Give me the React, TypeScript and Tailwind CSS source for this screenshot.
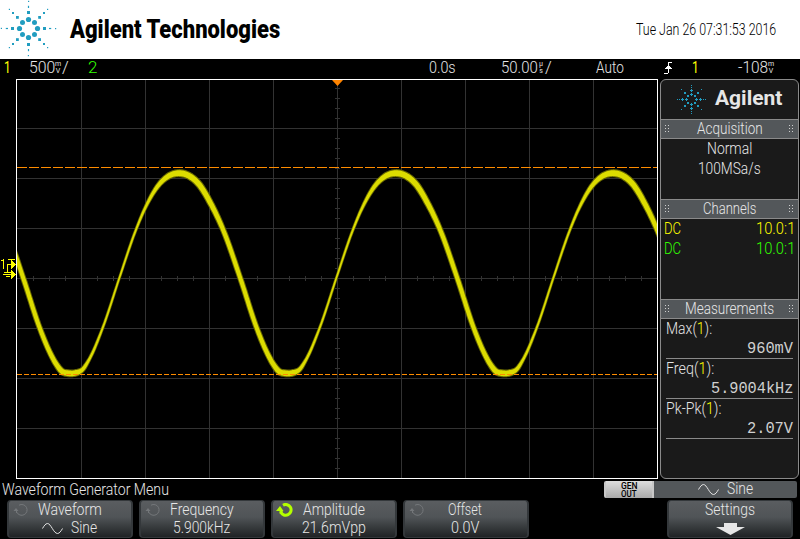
import { useLayoutEffect, useRef, type ReactNode } from "react";

/* Text stretched horizontally to fill the width given in its class name. */
function Fit({ className = "", children }: { className?: string; children: ReactNode }) {
  const outer = useRef<HTMLSpanElement>(null);
  const inner = useRef<HTMLSpanElement>(null);
  useLayoutEffect(() => {
    const apply = () => {
      if (!outer.current || !inner.current) return;
      const natural = inner.current.offsetWidth;
      if (natural) inner.current.style.transform = `translateY(-1px) scaleX(${outer.current.clientWidth / natural})`;
    };
    apply();
    document.fonts?.ready.then(apply);
  }, []);
  return (
    <span ref={outer} className={`block shrink-0 whitespace-nowrap ${className}`}>
      <span ref={inner} className="inline-block origin-left">
        {children}
      </span>
    </span>
  );
}

const C = "#219dc0";

function Spark({ className }: { className: string }) {
  const arms = [0, 90, 180, 270];
  return (
    <svg className={className} viewBox="-28.5 -28.5 57 57" fill={C}>
      {arms.map((a) => (
        <g key={a} transform={`rotate(${a})`}>
          <circle cx="9" cy="0" r="2.6" />
          <rect x="14.5" y="-1.5" width="3" height="3" />
          <rect x="20.5" y="-0.6" width="2.2" height="1.2" />
          <rect x="26.5" y="-0.5" width="1.2" height="1.2" />
          <circle cx="6" cy="6" r="2.5" />
          <rect x="9.7" y="9.7" width="2.8" height="2.8" />
          <rect x="14.5" y="14.5" width="2" height="2" />
          <rect x="18.5" y="18.5" width="1.2" height="1.2" />
        </g>
      ))}
    </svg>
  );
}

function SmallSpark({ className }: { className: string }) {
  return (
    <svg className={className} viewBox="-14.5 -14.5 29 29" fill={C} shapeRendering="crispEdges">
      {[0, 90, 180, 270].map((a) => (
        <g key={a} transform={`rotate(${a})`}>
          <path d="M3.5-.5h1v-1h1v1h1v1h-1v1h-1v-1h-1z" />
          <rect x="8.5" y="-1.5" width="1" height="3" />
          <rect x="7.5" y="-0.5" width="3" height="1" />
          <rect x="11.5" y="-0.5" width="1" height="1" />
          <rect x="13.5" y="-0.5" width="1" height="1" />
          <rect x="2.5" y="2.5" width="2" height="2" />
          <rect x="5.5" y="5.5" width="2" height="2" />
          <rect x="9.5" y="9.5" width="1" height="1" />
        </g>
      ))}
    </svg>
  );
}

/* One period of the trace: offset from the crest, height, stroke thickness. */
const CYCLE: [number, number, number][] = [
  [0, 173, 7.2],
  [10, 175.8, 7],
  [20, 184.5, 6.5],
  [31, 202.5, 6],
  [44, 230, 5.2],
  [61, 278, 5],
  [77.5, 328, 5],
  [87, 351, 5.2],
  [94, 364, 5.6],
  [99.5, 371, 6.3],
  [106, 373, 7],
  [114, 372.5, 6.5],
  [120.5, 369, 4.5],
  [127, 359, 3],
  [141, 326, 2.2],
  [157, 278, 2],
  [173.5, 230, 2.3],
  [183, 207.5, 3],
  [197, 184, 4.8],
  [207, 175.5, 6.3],
];
const PERIOD = 217;

function sample(x: number): [number, number] {
  const t = (((x - 178.8) % PERIOD) + PERIOD) % PERIOD;
  const n = CYCLE.length;
  const at = (i: number): [number, number, number] => {
    const k = ((i % n) + n) % n;
    const turn = Math.floor(i / n);
    return [CYCLE[k][0] + turn * PERIOD, CYCLE[k][1], CYCLE[k][2]];
  };
  let i = 0;
  while (at(i + 1)[0] <= t) i++;
  const tangent = (j: number) => {
    const a = at(j - 1), b = at(j), c = at(j + 1);
    const h0 = b[0] - a[0], h1 = c[0] - b[0];
    const s0 = (b[1] - a[1]) / h0, s1 = (c[1] - b[1]) / h1;
    return (s0 * h1 + s1 * h0) / (h0 + h1);
  };
  const b = at(i), c = at(i + 1);
  const h = c[0] - b[0];
  const u = (t - b[0]) / h;
  const m0 = tangent(i) * h;
  const m1 = tangent(i + 1) * h;
  const y =
    (2 * u ** 3 - 3 * u ** 2 + 1) * b[1] + (u ** 3 - 2 * u ** 2 + u) * m0 +
    (-2 * u ** 3 + 3 * u ** 2) * c[1] + (u ** 3 - u ** 2) * m1;
  return [y, b[2] + (c[2] - b[2]) * u];
}

function band(scale: number, extra: number) {
  const up: string[] = [];
  const down: string[] = [];
  for (let x = 14; x <= 660; x += 1) {
    const [y, w] = sample(x);
    const slope = sample(x + 0.5)[0] - sample(x - 0.5)[0];
    const len = Math.hypot(1, slope);
    const half = (w * scale + extra) / 2;
    const nx = (-slope / len) * half;
    const ny = half / len;
    up.push(`${(x + 0.5 - nx).toFixed(2)},${(y + 0.2 - ny).toFixed(2)}`);
    down.unshift(`${(x + 0.5 + nx).toFixed(2)},${(y + 0.2 + ny).toFixed(2)}`);
  }
  return [...up, ...down].join(" ");
}

const V_LINES = [81, 145, 209, 273, 337, 401, 465, 529, 593];
const H_LINES = [128, 178, 228, 278, 328, 378, 428];
const X_TICKS = Array.from({ length: 39 }, (_, i) => 33 + i * 16);
const Y_TICKS = Array.from({ length: 39 }, (_, i) => 88 + i * 10);

function Plot() {
  return (
    <svg className="block h-[400px] w-[660px] shrink-0" viewBox="0 79 660 400">
      <defs>
        <clipPath id="area">
          <rect x="17" y="80" width="640" height="398" />
        </clipPath>
      </defs>
      <g fill="#323232" shapeRendering="crispEdges">
        {V_LINES.map((x) => <rect key={x} x={x} y="80" width="1" height="398" />)}
        {H_LINES.map((y) => <rect key={y} x="17" y={y} width="640" height="1" />)}
        {X_TICKS.map((x) => <rect key={x} x={x} y="276" width="1" height="5" />)}
        {Y_TICKS.map((y) => <rect key={y} x="335" y={y} width="5" height="1" />)}
      </g>
      <g clipPath="url(#area)">
        <polygon points={band(1, 1)} fill="#686800" />
        <polygon points={band(0.82, 0)} fill="#dcdc00" />
      </g>
      <g stroke="#ff8c00" shapeRendering="crispEdges">
        <line x1="17" x2="657" y1="167.5" y2="167.5" strokeDasharray="10 2" />
        <line x1="17" x2="657" y1="374.5" y2="374.5" strokeDasharray="5 2" />
      </g>
      <path d="M332 80h11l-5.5 6z" fill="#ff8400" />
      <rect x="16.5" y="79.5" width="641" height="399" fill="none" stroke="#fff" shapeRendering="crispEdges" />
      <g fill="#ffff00" shapeRendering="crispEdges">
        <path d="M3 259h1v10h-1v-8h-2v-1h2z" />
        <path d="M8 259h7v1h-3v2h-1v-2h-3z" />
        <path d="M7 264h4v1h-3v8h-1z" />
        <path d="M4 272h7v1h-7zM3 274h9v1h-9zM6 276h4v1h-4z" />
        {[264, 274].map((y) =>
          [4, 3, 2, 1, 0].map((r, i) => (
            <rect key={`${y}-${r}`} x={11 + i} y={y - r} width="1" height={2 * r + 1} />
          ))
        )}
      </g>
    </svg>
  );
}

function Sine({ className = "" }: { className?: string }) {
  return (
    <svg className={`h-[13px] w-[21px] shrink-0 ${className}`} viewBox="0 0 21 13" fill="none" stroke="#e6e6e6" strokeWidth="1">
      <path d="M.5 6.5C2 4 3.500 1.500 5.500 1.500C9 1.500 11.500 11.500 15.500 11.500C17.500 11.500 19 9 20.500 6.500" />
    </svg>
  );
}

function Stacked({ top, bottom }: { top: string; bottom: string }) {
  return (
    <span className="flex w-[6px] shrink-0 flex-col items-center pt-[2px] text-[7px] leading-[6.5px] font-normal">
      <span>{top}</span>
      <span>{bottom}</span>
    </span>
  );
}

function Grip() {
  return (
    <svg className="h-[8px] w-[5px]" viewBox="0 0 5 8" fill="#d0d0d0" shapeRendering="crispEdges">
      {[0, 3, 6].map((y) => (
        <path key={y} d={`M0 ${y}h1v1h-1zM3 ${y}h1v1h-1z`} />
      ))}
    </svg>
  );
}

function Head({ children }: { children: ReactNode }) {
  return (
    <div className="flex h-[20px] items-center justify-between border-y border-[#8a8a8a] bg-[#53575a] px-[4px] leading-[18px]">
      <Grip />
      {children}
      <Grip />
    </div>
  );
}

function Measure({ label, w, value, vw }: { label: string; w: string; value: string; vw: string }) {
  return (
    <div className="ml-[5px] h-[40px] w-[127px] border-b border-[#8a8a8a]">
      <Fit className={`${w} h-[20px]`}>
        {label}(<span className="text-[#ffff00]">1</span>):
      </Fit>
      <div className="flex h-[19px] justify-end pt-[2px] font-['Liberation_Mono',monospace] text-[16px] leading-[19px] font-normal text-[#d0d0d0]">
        <Fit className={vw}>{value}</Fit>
      </div>
    </div>
  );
}

function Knob({ on }: { on?: boolean }) {
  const color = on ? "#b4ff00" : "#74777a";
  return (
    <svg className="absolute top-[2px] left-[3px] h-[16px] w-[18px]" viewBox="0 0 18 16">
      <path d="M7 2.200A5.400 5.400 0 1 1 4.800 9.200" fill="none" stroke={color} strokeWidth={on ? 3 : 1} />
      <path d={on ? "M0 8L4 3L7.500 8L6.500 8.500V10.500H3.500V8z" : "M1.500 8L4 5L6.500 8H5v2H4V8z"} fill={color} />
    </svg>
  );
}

function Key({ className = "", children }: { className?: string; children: ReactNode }) {
  return (
    <div className={`relative flex h-[38px] w-[126px] shrink-0 flex-col items-center rounded-[4px] border-x-2 border-t border-b border-[#34383b] bg-linear-to-b from-[#5a5d60] from-0% via-[#505457] via-45% to-[#202325] to-100% leading-[18px] ${className}`}>
      {children}
    </div>
  );
}

export default function App() {
  return (
    <div className="flex h-[539px] w-[800px] flex-col overflow-hidden bg-black font-[Roboto,sans-serif] text-[17px] leading-[20px] font-light text-[#e6e6e6]">
      <header className="flex h-[59px] shrink-0 items-center bg-white text-black">
        <Spark className="mb-[2px] h-[57px] w-[57px] shrink-0" />
        <Fit className="mt-[2px] ml-[13px] w-[210px] text-[25px] leading-[30px] font-black">Agilent Technologies</Fit>
        <Fit className="ml-[356px] w-[140px]">Tue Jan 26 07:31:53 2016</Fit>
      </header>

      <div className="flex h-[20px] shrink-0 items-start leading-[18px]">
        <Fit className="ml-[4px] w-[7px] font-normal text-[#ffff00]">1</Fit>
        <Fit className="ml-[18px] w-[26px]">500</Fit>
        <Stacked top="m" bottom="V" />
        <Fit className="ml-[1px] w-[7px]">/</Fit>
        <Fit className="ml-[19px] w-[9px] text-[#33ff00]">2</Fit>
        <Fit className="ml-[332px] w-[27px]">0.0s</Fit>
        <Fit className="ml-[45px] w-[37px]">50.00</Fit>
        <Stacked top="µ" bottom="s" />
        <Fit className="ml-[1px] w-[7px]">/</Fit>
        <Fit className="ml-[44px] w-[28px]">Auto</Fit>
        <svg className="mt-[3px] ml-[40px] h-[12px] w-[9px]" viewBox="0 0 9 12" fill="#fff" shapeRendering="crispEdges">
          <path d="M4 0h4v1h-3v3h1v1h1v1h1v1h-3v4h-1v1h-4v-1h4v-4h-3v-1h1v-1h1v-1h1z" />
        </svg>
        <Fit className="ml-[19px] w-[7px] font-normal text-[#ffff00]">1</Fit>
        <Fit className="ml-[39px] w-[30px]">-108</Fit>
        <Stacked top="m" bottom="V" />
      </div>

      <main className="flex h-[400px] shrink-0">
        <Plot />
        <aside className="h-[400px] w-[139px] rounded-[6px] border border-[#8a8a8a] bg-[#1a1a1a]">
          <div className="flex h-[39px] items-center">
            <SmallSpark className="ml-[16px] h-[29px] w-[29px]" />
            <Fit className="mb-[2px] ml-[9px] w-[67px] text-[21px] leading-[28px] font-bold">Agilent</Fit>
          </div>
          <Head><Fit className="w-[66px]">Acquisition</Fit></Head>
          <div className="flex h-[60px] flex-col items-center">
            <Fit className="w-[45px]">Normal</Fit>
            <Fit className="w-[63px]">100MSa/s</Fit>
          </div>
          <Head><Fit className="w-[53px]">Channels</Fit></Head>
          <div className="h-[80px] px-[3px]">
            <div className="flex justify-between text-[#ffff00]">
              <Fit className="w-[17px]">DC</Fit>
              <Fit className="w-[39px]">10.0:1</Fit>
            </div>
            <div className="flex justify-between text-[#33ff00]">
              <Fit className="w-[17px]">DC</Fit>
              <Fit className="w-[39px]">10.0:1</Fit>
            </div>
          </div>
          <Head><Fit className="w-[89px]">Measurements</Fit></Head>
          <Measure label="Max" w="w-[46px]" value="960mV" vw="w-[46px]" />
          <Measure label="Freq" w="w-[48px]" value="5.9004kHz" vw="w-[82px]" />
          <Measure label="Pk-Pk" w="w-[55px]" value="2.07V" vw="w-[46px]" />
        </aside>
      </main>

      <div className="flex h-[21px] shrink-0 pt-[2px]">
        <Fit className="-mt-[1px] ml-[2px] w-[167px]">Waveform Generator Menu</Fit>
        <div className="ml-[435px] flex h-[17px] w-[50px] flex-col items-center rounded-l-[2px] border-x-2 border-[#c8c8c8] bg-linear-to-b from-[#dedede] to-[#aaaaaa] pt-[2px] font-medium text-black">
          <Fit className="h-[8px] w-[17px] text-[9px] leading-[8px]">GEN</Fit>
          <Fit className="h-[8px] w-[16px] text-[9px] leading-[8px]">OUT</Fit>
        </div>
        <div className="flex h-[17px] w-[143px] items-center rounded-r-[2px] bg-[#53575a] pl-[44px] leading-[17px]">
          <Sine />
          <Fit className="ml-[8px] w-[26px]">Sine</Fit>
        </div>
      </div>

      <nav className="flex h-[39px] shrink-0 gap-[6px] pl-[7px]">
        <Key>
          <Knob />
          <Fit className="w-[64px]">Waveform</Fit>
          <div className="mr-[2px] flex items-center">
            <Sine className="mr-[8px]" />
            <Fit className="w-[26px]">Sine</Fit>
          </div>
        </Key>
        <Key>
          <Knob />
          <Fit className="w-[64px]">Frequency</Fit>
          <Fit className="mr-[2px] w-[57px]">5.900kHz</Fit>
        </Key>
        <Key>
          <Knob on />
          <Fit className="w-[62px]">Amplitude</Fit>
          <Fit className="w-[64px]">21.6mVpp</Fit>
        </Key>
        <Key>
          <Knob />
          <Fit className="mr-[2px] w-[34px]">Offset</Fit>
          <Fit className="mr-[2px] w-[28px]">0.0V</Fit>
        </Key>
        <Key className="ml-[132px]">
          <Fit className="w-[50px]">Settings</Fit>
          <svg className="mt-[4px] h-[12px] w-[29px]" viewBox="0 0 29 12" fill="#e6e6e6">
            <path d="M8 0h13v4h8L14.500 12L0 4h8z" />
          </svg>
        </Key>
      </nav>
    </div>
  );
}
